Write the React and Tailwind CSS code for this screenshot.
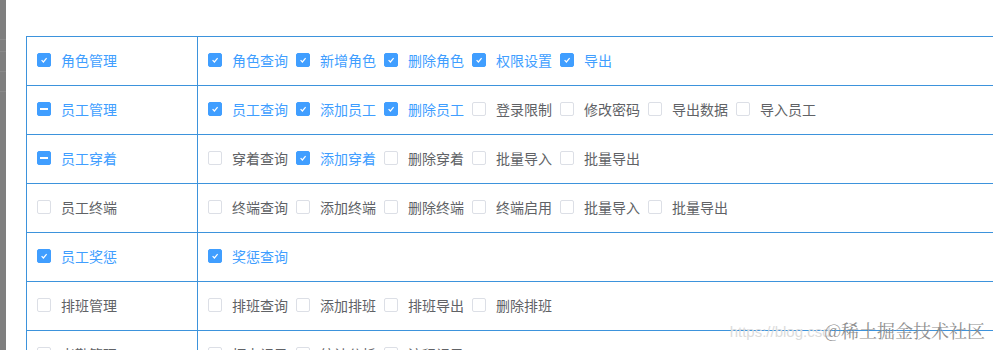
import React from "react";

const rows = [
  { name: "角色管理", state: "checked", items: [["角色查询", 1], ["新增角色", 1], ["删除角色", 1], ["权限设置", 1], ["导出", 1]] },
  { name: "员工管理", state: "half", items: [["员工查询", 1], ["添加员工", 1], ["删除员工", 1], ["登录限制", 0], ["修改密码", 0], ["导出数据", 0], ["导入员工", 0]] },
  { name: "员工穿着", state: "half", items: [["穿着查询", 0], ["添加穿着", 1], ["删除穿着", 0], ["批量导入", 0], ["批量导出", 0]] },
  { name: "员工终端", state: "none", items: [["终端查询", 0], ["添加终端", 0], ["删除终端", 0], ["终端启用", 0], ["批量导入", 0], ["批量导出", 0]] },
  { name: "员工奖惩", state: "checked", items: [["奖惩查询", 1]] },
  { name: "排班管理", state: "none", items: [["排班查询", 0], ["添加排班", 0], ["排班导出", 0], ["删除排班", 0]] },
  { name: "考勤管理", state: "none", items: [["打卡记录", 0], ["统计分析", 0], ["流程记录", 0]] },
];

function Box({ state }) {
  if (state === "checked") {
    return (
      <span className="w-[14px] h-[14px] rounded-[2px] bg-[#409eff] border border-[#409eff] flex items-center justify-center shrink-0">
        <svg width="10" height="10" viewBox="0 0 10 10">
          <polyline points="2.6,5.2 4.4,7 7.6,3.2" fill="none" stroke="#fff" strokeWidth="1.2" />
        </svg>
      </span>
    );
  }
  if (state === "half") {
    return (
      <span className="w-[14px] h-[14px] rounded-[2px] bg-[#409eff] border border-[#409eff] flex items-center justify-center shrink-0">
        <span className="w-[8px] h-[2px] bg-white" />
      </span>
    );
  }
  return <span className="w-[14px] h-[14px] rounded-[2px] bg-white border border-[#dcdfe6] shrink-0" />;
}

function Item({ label, state, className = "" }) {
  const on = state !== "none";
  return (
    <span className={"inline-flex items-center " + className}>
      <Box state={state} />
      <span className={"pl-[10px] text-[14px] leading-[14px] whitespace-nowrap " + (on ? "text-[#409eff]" : "text-[#606266]")}>
        {label}
      </span>
    </span>
  );
}

export default function App() {
  return (
    <div
      className="relative flex h-[350px] w-[993px] overflow-hidden bg-white"
      style={{ fontFamily: '"Microsoft YaHei", "Noto Sans CJK SC", "Noto Sans", sans-serif' }}
    >
      <div className="w-[6px] shrink-0 bg-[#7f7f7f] flex flex-col">
        <div className="h-[40px] border-b border-[#8a8a8a]" />
        <div className="h-[12px] border-b border-[#8a8a8a]" />
        <div className="h-[20px] border-b border-[#8a8a8a]" />
        <div className="h-[20px] border-b border-[#8a8a8a]" />
      </div>
      <div className="flex-1 overflow-hidden pt-[36px] pl-[20px]">
        <div className="w-[1000px] border-t border-l border-[#3d93dc]">
          {rows.map((r) => (
            <div key={r.name} className="flex h-[49px] border-b border-[#3d93dc]">
              <div className="w-[171px] shrink-0 border-r border-[#3d93dc] pl-[10px] pb-[2px] flex items-center">
                <Item label={r.name} state={r.state} />
              </div>
              <div className="flex-1 pl-[10px] pb-[2px] flex items-center">
                {r.items.map(([l, c], i) => (
                  <Item key={i} label={l} state={c ? "checked" : "none"} className="mr-[8px]" />
                ))}
              </div>
            </div>
          ))}
        </div>
      </div>
      <div className="absolute right-[8px] top-[318px] flex items-end pointer-events-none">
        <span className="text-[15px] leading-[20px] text-[#dcdcdc]" style={{ fontFamily: '"Liberation Sans", sans-serif' }}>
          https://blog.csd
        </span>
        <span
          className="text-[18px] leading-[24px] text-[#8f8f8f] -ml-[6px]"
          style={{ fontFamily: '"Noto Serif CJK SC", "Noto Sans CJK SC", serif' }}
        >
          @稀土掘金技术社区
        </span>
      </div>
    </div>
  );
}
